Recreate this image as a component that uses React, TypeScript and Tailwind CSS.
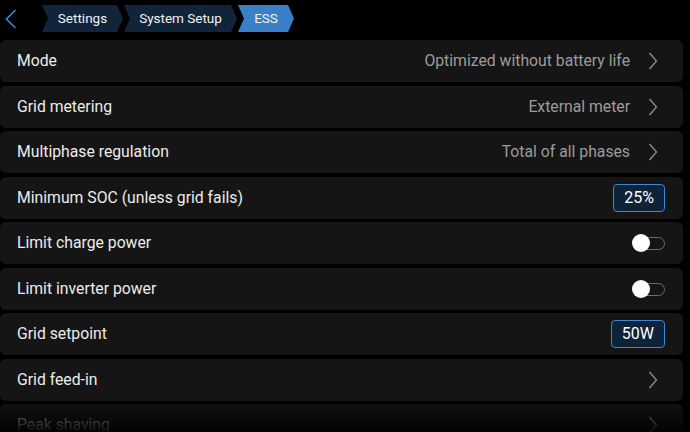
import React from 'react';

type Row =
    | { label: string; kind: 'link'; value?: string }
    | { label: string; kind: 'spin'; value: string }
    | { label: string; kind: 'toggle' };

const rows: Row[] = [
    { label: 'Mode', kind: 'link', value: 'Optimized without battery life' },
    { label: 'Grid metering', kind: 'link', value: 'External meter' },
    { label: 'Multiphase regulation', kind: 'link', value: 'Total of all phases' },
    { label: 'Minimum SOC (unless grid fails)', kind: 'spin', value: '25%' },
    { label: 'Limit charge power', kind: 'toggle' },
    { label: 'Limit inverter power', kind: 'toggle' },
    { label: 'Grid setpoint', kind: 'spin', value: '50W' },
    { label: 'Grid feed-in', kind: 'link' },
    { label: 'Peak shaving', kind: 'link' },
];

const Chevron = () => (
    <svg width="10" height="18" viewBox="0 0 10 18" className="shrink-0">
        <path d="M1.5 1 L8.5 9 L1.5 17" fill="none" stroke="#8a8a8a" strokeWidth="1.4" />
    </svg>
);

const Crumb = ({ text, width, active }: { text: string; width: number; active?: boolean }) => {
    const h = 27;
    const p = 6;
    const d = `M0 0 H${width - p} L${width} ${h / 2} L${width - p} ${h} H0 L${p} ${h / 2} Z`;
    return (
        <div className="relative flex items-center justify-center" style={{ width, height: h }}>
            <svg width={width} height={h} className="absolute inset-0">
                <path d={d} fill={active ? '#3b7fc6' : '#11243a'} />
            </svg>
            <span className="relative text-[13.5px] text-[#f2f2f2]">{text}</span>
        </div>
    );
};

const Toggle = () => (
    <div className="relative h-[18px] w-[33px] shrink-0">
        <div className="absolute right-0 top-[3px] h-[13px] w-[26px] rounded-full border-[1.5px] border-[#6b6b6b]" />
        <div className="absolute left-0 top-0 h-[18px] w-[18px] rounded-full bg-white" />
    </div>
);

export default function App() {
    return (
        <div
            className="relative h-[432px] w-[690px] overflow-hidden bg-black"
            style={{ fontFamily: 'Roboto, "Liberation Sans", sans-serif' }}
        >
            <div className="flex h-[40px] items-start pt-[5px]">
                <div className="flex h-[27px] w-[42px] items-center pl-[5px]">
                    <svg width="12" height="20" viewBox="0 0 12 20">
                        <path d="M10.5 1 L1.5 10 L10.5 19" fill="none" stroke="#3d86d4" strokeWidth="1.6" />
                    </svg>
                </div>
                <div className="flex gap-[1px]">
                    <Crumb text="Settings" width={81} />
                    <Crumb text="System Setup" width={113} />
                    <Crumb text="ESS" width={56} active />
                </div>
            </div>
            <div className="flex w-[683px] flex-col gap-[3.5px]">
                {rows.map((row, i) => (
                    <div
                        key={row.label}
                        className="flex h-[42px] items-center justify-between rounded-[6px] bg-[#151515] pl-[17px] pr-[25px]"
                    >
                        <span className={`text-[15.75px] ${i === 8 ? 'text-[#a0a0a0]' : 'text-[#ececec]'}`}>{row.label}</span>
                        {row.kind === 'link' && (
                            <div className="flex items-center gap-[18px]">
                                {row.value && <span className="text-[15.75px] text-[#9c9c9c]">{row.value}</span>}
                                <Chevron />
                            </div>
                        )}
                        {row.kind === 'spin' && (
                            <div className="mr-[-7px] flex h-[28px] items-center rounded-[4px] border-[1.5px] border-[#3d86d4] bg-[#0e2238] px-[10px] text-[16px] text-white">
                                {row.value}
                            </div>
                        )}
                        {row.kind === 'toggle' && (
                            <div className="mr-[-7px]">
                                <Toggle />
                            </div>
                        )}
                    </div>
                ))}
            </div>
            <div className="pointer-events-none absolute bottom-0 left-0 h-[36px] w-full bg-gradient-to-b from-transparent to-black/90" />
        </div>
    );
}
